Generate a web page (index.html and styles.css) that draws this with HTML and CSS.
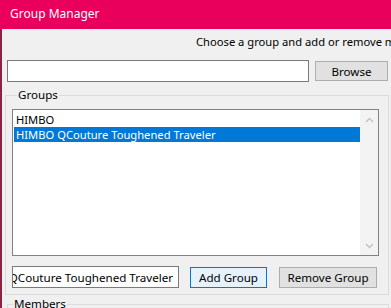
FILE: index.html
```html
<!DOCTYPE html>
<html lang="en">
<head>
    <meta charset="UTF-8">
    <meta name="viewport" content="width=device-width, initial-scale=1.0">
    <title>Group Manager</title>
    <link rel="stylesheet" href="styles.css">
</head>
<body>

    <div class="titlebar">Group Manager</div>

    <div class="window">
        <p class="prompt">Choose a group and add or remove members</p>

        <div class="file-row">
            <input type="text" class="path-input">
            <button class="btn browse">Browse</button>
        </div>

        <fieldset class="box groups">
            <legend>Groups</legend>

            <div class="listbox">
                <ul class="items">
                    <li>HIMBO</li>
                    <li class="selected">HIMBO QCouture Toughened Traveler</li>
                </ul>
                <div class="scrollbar">
                    <svg width="9" height="6" viewBox="0 0 9 6"><path d="M1 5 L4.5 1.5 L8 5" fill="none" stroke="#c2c2c2" stroke-width="1.4"/></svg>
                    <svg width="9" height="6" viewBox="0 0 9 6"><path d="M1 1 L4.5 4.5 L8 1" fill="none" stroke="#c2c2c2" stroke-width="1.4"/></svg>
                </div>
            </div>

            <div class="group-row">
                <div class="name-input"><span>HIMBO QCouture Toughened Traveler</span></div>
                <button class="btn add">Add Group</button>
                <button class="btn remove">Remove Group</button>
            </div>
        </fieldset>

        <fieldset class="box members">
            <legend>Members</legend>
        </fieldset>
    </div>

</body>
</html>
```

FILE: styles.css
```css
body {
    margin: 0;
    width: 391px;
    height: 308px;
    overflow: hidden;
    background-color: #f0f0f0;
    font-family: "Noto Sans", "Open Sans", sans-serif;
    font-size: 11.2px;
    color: #000;
}

.titlebar {
    height: 29px;
    line-height: 28px;
    padding-left: 10px;
    font-size: 12px;
    background-color: #e9005d;
    color: white;
}

.window {
    border-left: 2px solid #8d2146;
    height: 279px;
    overflow: hidden;
}

.prompt {
    margin: 0;
    padding: 5px 0 0 194px;
    height: 26px;
    line-height: 16px;
    white-space: nowrap;
}

.file-row {
    display: flex;
    align-items: center;
    padding-left: 5px;
    height: 22px;
}

.path-input {
    box-sizing: border-box;
    width: 302px;
    height: 22px;
    margin: 0;
    border: 1px solid #7a7a7a;
    background: white;
}

.btn {
    box-sizing: border-box;
    margin: 0;
    padding: 0;
    height: 21px;
    font-family: inherit;
    font-size: 11.6px;
    color: #000;
    background-color: #e1e1e1;
    border: 1px solid #adadad;
}

.browse {
    width: 73px;
    height: 20px;
    margin-left: 6px;
}

.box {
    margin: 0;
    padding: 0;
    border: 1px solid #dcdcdc;
    min-width: 0;
}

.box legend {
    padding: 0 1px;
    margin-left: 5px;
    line-height: 14px;
    font-size: 11.6px;
}

.groups {
    margin: 6px 0 0 3px;
    width: 384px;
    box-sizing: border-box;
    padding: 7px 0 6px 6px;
}

.listbox {
    display: flex;
    box-sizing: border-box;
    width: 367px;
    height: 147px;
    border: 1px solid #828282;
    background: white;
}

.items {
    list-style: none;
    margin: 0;
    padding: 2px 0 0 1px;
    flex: 1;
}

.items li {
    height: 15px;
    line-height: 15px;
    padding-left: 2px;
    white-space: nowrap;
}

.items .selected {
    background-color: #0078d7;
    color: white;
}

.scrollbar {
    width: 18px;
    background-color: #f3f3f3;
    display: flex;
    flex-direction: column;
    align-items: center;
    justify-content: space-between;
    padding: 7px 0 6px;
    box-sizing: border-box;
}

.group-row {
    display: flex;
    align-items: center;
    margin-top: 10px;
}

.name-input {
    box-sizing: border-box;
    width: 167px;
    height: 22px;
    border: 1px solid #7a7a7a;
    background: white;
    overflow: hidden;
    display: flex;
    justify-content: flex-end;
    align-items: center;
    padding-right: 5px;
    white-space: nowrap;
    font-size: 11.6px;
}

.add {
    width: 77px;
    margin-left: 11px;
    background-color: #e5f1fb;
    border-color: #0078d7;
}

.remove {
    width: 98px;
    margin-left: 12px;
}

.members {
    margin: 2px 0 0 5px;
    width: 380px;
    height: 40px;
}
```
